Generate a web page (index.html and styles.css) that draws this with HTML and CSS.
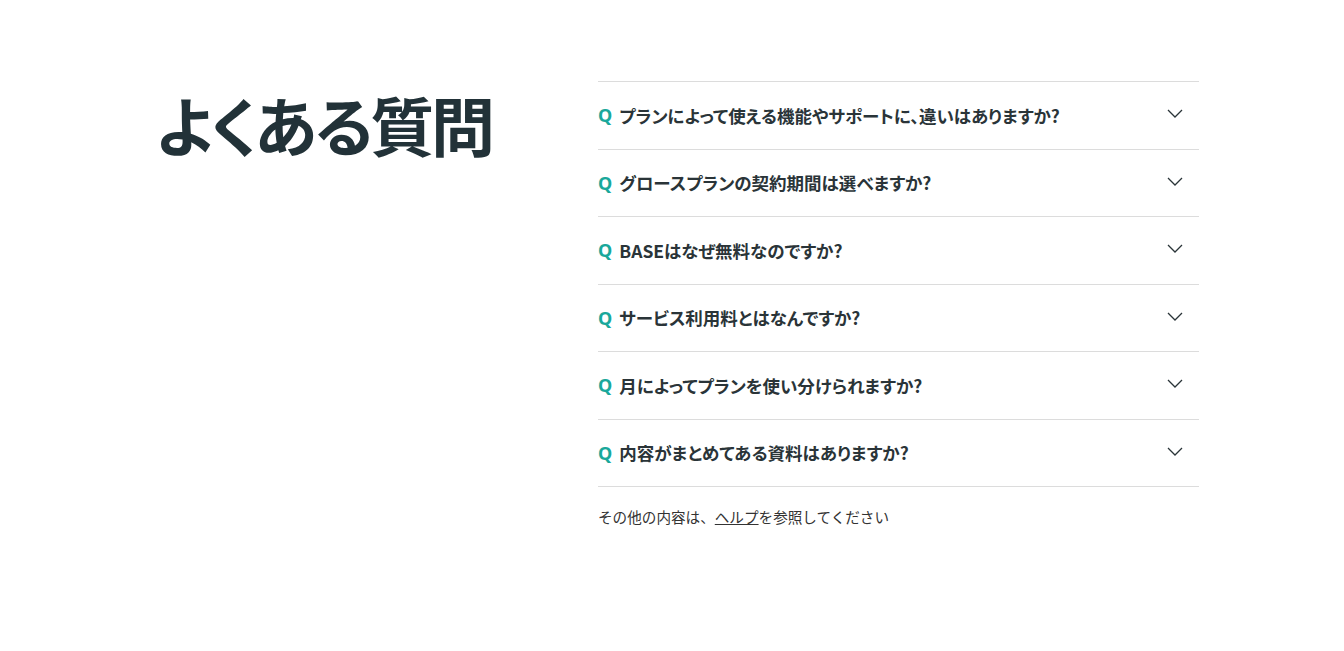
FILE: index.html
```html
<!DOCTYPE html>
<html lang="ja">
<head>
<meta charset="utf-8">
<title>よくある質問</title>
<link rel="stylesheet" href="styles.css">
</head>
<body>
<section class="faq">
  <div class="faq-head">
    <h2 class="faq-title">よくある質問</h2>
  </div>
  <div class="faq-body">
    <ul class="faq-list">
      <li class="faq-item"><span class="faq-q">Q</span><span class="faq-text">プランによって使える機能やサポートに、違いはありますか?</span><svg class="faq-chev" width="16" height="9" viewBox="0 0 16 9"><path d="M1 1l7 7 7-7" fill="none" stroke="#2a3438" stroke-width="1.3"/></svg></li>
      <li class="faq-item"><span class="faq-q">Q</span><span class="faq-text">グロースプランの契約期間は選べますか?</span><svg class="faq-chev" width="16" height="9" viewBox="0 0 16 9"><path d="M1 1l7 7 7-7" fill="none" stroke="#2a3438" stroke-width="1.3"/></svg></li>
      <li class="faq-item"><span class="faq-q">Q</span><span class="faq-text">BASEはなぜ無料なのですか?</span><svg class="faq-chev" width="16" height="9" viewBox="0 0 16 9"><path d="M1 1l7 7 7-7" fill="none" stroke="#2a3438" stroke-width="1.3"/></svg></li>
      <li class="faq-item"><span class="faq-q">Q</span><span class="faq-text">サービス利用料とはなんですか?</span><svg class="faq-chev" width="16" height="9" viewBox="0 0 16 9"><path d="M1 1l7 7 7-7" fill="none" stroke="#2a3438" stroke-width="1.3"/></svg></li>
      <li class="faq-item"><span class="faq-q">Q</span><span class="faq-text">月によってプランを使い分けられますか?</span><svg class="faq-chev" width="16" height="9" viewBox="0 0 16 9"><path d="M1 1l7 7 7-7" fill="none" stroke="#2a3438" stroke-width="1.3"/></svg></li>
      <li class="faq-item"><span class="faq-q">Q</span><span class="faq-text">内容がまとめてある資料はありますか?</span><svg class="faq-chev" width="16" height="9" viewBox="0 0 16 9"><path d="M1 1l7 7 7-7" fill="none" stroke="#2a3438" stroke-width="1.3"/></svg></li>
    </ul>
    <p class="faq-note">その他の内容は、<a class="faq-link" href="#">ヘルプ</a>を参照してください</p>
  </div>
</section>
</body>
</html>
```

FILE: styles.css
```css
html, body {
  margin: 0;
  padding: 0;
  background: #fff;
}
body {
  font-family: "Noto Sans CJK JP", "Noto Sans", sans-serif;
  color: #243238;
}
.faq {
  display: flex;
  padding: 81px 0 0 156px;
}
.faq-head {
  width: 442px;
  flex: none;
}
.faq-title {
  margin: 0;
  padding-top: 10px;
  font-size: 64px;
  line-height: 1;
  font-weight: 700;
  color: #223238;
  letter-spacing: -3.2px;
  font-feature-settings: "palt";
}
.faq-body {
  width: 601px;
  flex: none;
}
.faq-list {
  list-style: none;
  margin: 0;
  padding: 0;
  border-top: 1px solid #dcdcdc;
}
.faq-item {
  display: flex;
  align-items: center;
  height: 66.5px;
  border-bottom: 1px solid #dcdcdc;
  font-size: 17.5px;
  font-weight: 700;
  color: #2a3438;
  font-feature-settings: "palt";
}
.faq-q {
  color: #1aa89b;
  font-size: 18px;
  font-weight: 700;
  margin-right: 7px;
  font-family: "Noto Sans", sans-serif;
}
.faq-text {
  flex: 1;
}
.faq-chev {
  margin-right: 16px;
  margin-top: -3px;
}
.faq-note {
  margin: 20px 0 0;
  font-size: 14.6px;
  line-height: 20px;
  color: #333;
}
.faq-link {
  color: #333;
  text-decoration: underline;
}
```
